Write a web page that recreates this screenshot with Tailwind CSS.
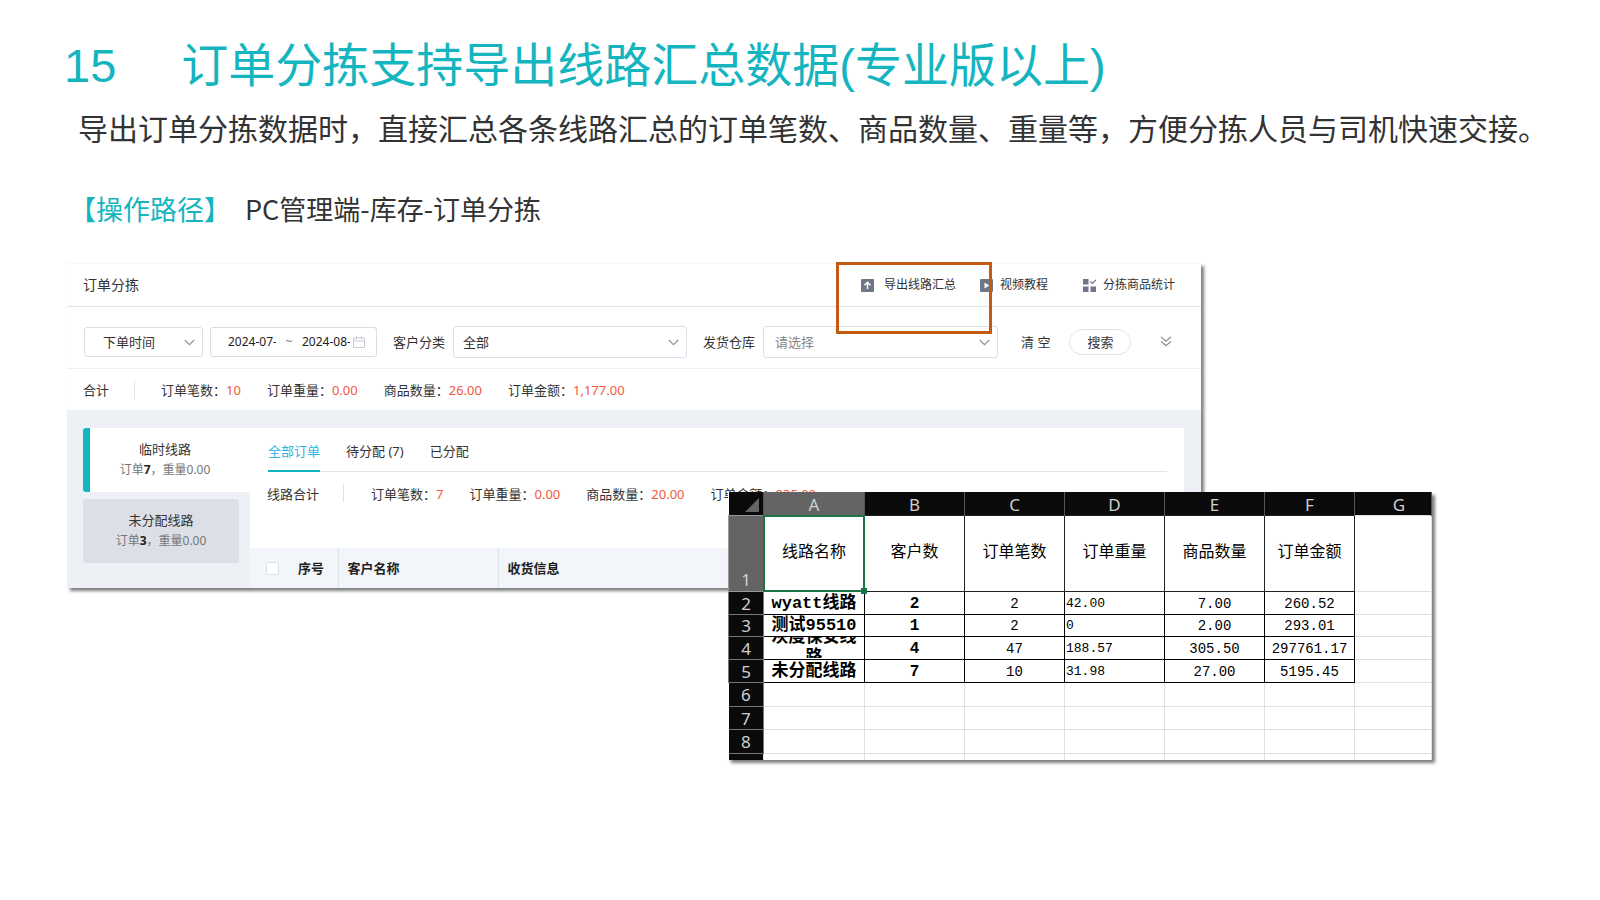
<!DOCTYPE html>
<html lang="zh-CN">
<head>
<meta charset="utf-8">
<meta name="viewport" content="width=device-width, initial-scale=1">
<title>订单分拣支持导出线路汇总数据</title>
<script src="https://cdn.jsdelivr.net/npm/@tailwindcss/browser@4"></script>
</head>
<body class="min-h-screen bg-white font-['Noto_Sans','Noto_Sans_CJK_SC',sans-serif] text-[#333]">
<main class="px-16 pt-[38px] pb-10">
  <h1 class="flex gap-[65px] text-[47px] leading-[56px] text-[#14b5bf] font-['Liberation_Sans','Noto_Sans_CJK_SC',sans-serif]">
    <span>15</span><span>订单分拣支持导出线路汇总数据(专业版以上)</span>
  </h1>
  <p class="-mr-12 mt-[13px] ml-[14px] text-[30px] leading-10 font-['Noto_Sans_CJK_SC',sans-serif]">导出订单分拣数据时，直接汇总各条线路汇总的订单笔数、商品数量、重量等，方便分拣人员与司机快速交接。</p>
  <p class="mt-[44px] ml-[5px] flex gap-[14px] text-[27px] leading-9 font-['Noto_Sans_CJK_SC',sans-serif]"><span class="text-[#14b5bf]">【操作路径】</span><span>PC管理端-库存-订单分拣</span></p>

  <div class="relative mt-9 ml-[3px]">
    <!-- Order sorting screen -->
    <section class="w-full max-w-[1134px] bg-white text-[13px] leading-5 shadow-[3px_3px_3px_rgba(0,0,0,0.5)]">
      <header class="flex h-11 items-center border-t border-b border-t-[#f7f7f7] border-b-[#e2e4e6] pr-[26px] pl-4">
        <h2 class="text-[14px]">订单分拣</h2>
        <div class="ml-auto flex items-center text-[12px]">
          <button type="button" class="relative flex items-center gap-[10px]">
            <svg class="size-[13px]" viewBox="0 0 13 13"><rect width="13" height="13" rx="1" fill="#6f7688"/><path d="M6.500 10V3.500M3.500 6.300l3-3 3 3" fill="none" stroke="#fff" stroke-width="1.500"/></svg>
            <span>导出线路汇总</span>
            <span class="absolute -top-[13px] -right-9 z-10 h-[72px] w-[156px] border-3 border-[#c55a11]"></span>
          </button>
          <button type="button" class="ml-6 flex items-center gap-[7px]">
            <svg class="size-[13px]" viewBox="0 0 13 13"><rect width="13" height="13" rx="1" fill="#6f7688"/><path d="M4.500 3.500v6L9.300 6.500z" fill="#fff"/></svg>
            <span>视频教程</span>
          </button>
          <button type="button" class="ml-[35px] flex items-center gap-[7px]">
            <svg class="size-[13px]" viewBox="0 0 13 13"><path d="M0 0h5.500v5.500H0zM0 7.500h5.500V13H0zM7.500 7.500H13V13H7.500z" fill="#6f7688"/><path d="M7.300 2.500l2 2L13 .8" fill="none" stroke="#6f7688" stroke-width="1.200"/></svg>
            <span>分拣商品统计</span>
          </button>
        </div>
      </header>

      <form class="flex h-[62px] items-center border-b border-[#eceff5] pt-2 pl-[17px]">
        <div class="relative w-[119px]">
          <select aria-label="时间类型" class="block h-[30px] w-full appearance-none rounded-[3px] border border-[#d9e0ea] bg-white pl-[18px]"><option>下单时间</option></select>
          <svg class="pointer-events-none absolute top-3 right-2 h-[7px] w-[11px]" viewBox="0 0 11 7" fill="none" stroke="#909399" stroke-width="1.200"><path d="M.8 1l4.700 4.700L10.200 1"/></svg>
        </div>
        <div class="ml-[7px] flex h-[30px] w-[167px] items-center rounded-[3px] border border-[#d9dce3] pl-[17px] text-[12px] text-[#222]">
          <input aria-label="开始日期" value="2024-07-01" class="w-12">
          <span class="w-[26px] text-center text-[#777]">~</span>
          <input aria-label="结束日期" value="2024-08-01" class="w-12">
          <svg class="ml-[3px] size-3" viewBox="0 0 12 12" fill="none" stroke="#c8cbd1"><path d="M.5 2h11v9.500H.5zM.5 5h11M3.500 0v3M8.500 0v3"/></svg>
        </div>
        <label for="cat" class="ml-4">客户分类</label>
        <div class="relative ml-2 w-[234px]">
          <select id="cat" class="block h-8 w-full appearance-none rounded-[3px] border border-[#d9e0ea] bg-white pl-[9px]"><option>全部</option></select>
          <svg class="pointer-events-none absolute top-[13px] right-2 h-[7px] w-[11px]" viewBox="0 0 11 7" fill="none" stroke="#909399" stroke-width="1.200"><path d="M.8 1l4.700 4.700L10.200 1"/></svg>
        </div>
        <label for="wh" class="ml-4">发货仓库</label>
        <div class="relative ml-2 w-[235px]">
          <select id="wh" class="block h-8 w-full appearance-none rounded-[3px] border border-[#d9e0ea] bg-white pl-[11px] text-[#888]"><option>请选择</option></select>
          <svg class="pointer-events-none absolute top-[13px] right-2 h-[7px] w-[11px]" viewBox="0 0 11 7" fill="none" stroke="#909399" stroke-width="1.200"><path d="M.8 1l4.700 4.700L10.200 1"/></svg>
        </div>
        <button type="reset" class="ml-[23px]">清 空</button>
        <button type="button" class="ml-[19px] h-[26px] w-[62px] rounded-full border border-[#dfe4ee]">搜索</button>
        <button type="button" aria-label="展开" class="ml-[29px]"><svg class="h-[11px] w-3" viewBox="0 0 12 11" fill="none" stroke="#80848c" stroke-width="1.100"><path d="M1 .8l5 4.400L11 .8M1 5.300l5 4.400 5-4.400"/></svg></button>
      </form>

      <div class="flex h-[41px] items-center pl-4">
        <span>合计</span>
        <span class="mr-[26px] ml-[25px] h-[18px] w-px bg-[#dfe2e8]"></span>
        <div class="flex gap-[26px]">
          <span>订单笔数：<b class="font-normal text-[#f0593c]">10</b></span>
          <span>订单重量：<b class="font-normal text-[#f0593c]">0.00</b></span>
          <span>商品数量：<b class="font-normal text-[#f0593c]">26.00</b></span>
          <span>订单金额：<b class="font-normal text-[#f0593c]">1,177.00</b></span>
        </div>
      </div>

      <div class="flex bg-[#edf0f5] pt-[18px] pr-[17px] pl-4">
        <nav class="w-[167px] shrink-0">
          <a href="#" class="block h-16 rounded-l-[3px] border-l-7 border-[#14b5bf] bg-white pt-[11px] pr-[10px] text-center">临时线路<br><span class="text-[12px] text-[#777]">订单<b class="text-[#222]">7</b>，重量0.00</span></a>
          <a href="#" class="mt-[7px] mr-[11px] block h-16 rounded-[3px] bg-[#dcdfe6] pt-[11px] text-center">未分配线路<br><span class="text-[12px] text-[#777]">订单<b class="text-[#222]">3</b>，重量0.00</span></a>
        </nav>
        <div class="min-w-0 grow bg-white">
          <div class="mr-[17px] ml-[18px] flex h-11 items-end gap-[26px] border-b border-[#dfe4ec]">
            <button type="button" class="-mb-px h-8 border-b-2 border-[#14b5bf] pb-[9px] text-[#2fb4e0]">全部订单</button>
            <button type="button" class="h-8 pb-[9px]">待分配 (7)</button>
            <button type="button" class="h-8 pb-[9px]">已分配</button>
          </div>
          <div class="flex h-[76px] items-start pt-3 pl-[17px] whitespace-nowrap">
            <span>线路合计</span>
            <span class="mr-[27px] ml-6 h-[18px] w-px shrink-0 bg-[#dfe2e8]"></span>
            <div class="flex gap-[26px]">
              <span>订单笔数：<b class="font-normal text-[#f0593c]">7</b></span>
              <span>订单重量：<b class="font-normal text-[#f0593c]">0.00</b></span>
              <span>商品数量：<b class="font-normal text-[#f0593c]">20.00</b></span>
              <span>订单金额：<b class="font-normal text-[#f0593c]">835.00</b></span>
            </div>
          </div>
          <table class="w-full table-fixed bg-[#f2f5fa] text-left text-[#222]">
            <colgroup><col class="w-12"><col class="w-10"><col class="w-40"><col></colgroup>
            <thead><tr class="h-10">
              <th class="pl-4"><input type="checkbox" aria-label="全选" class="block size-[13px] appearance-none rounded-[2px] border border-[#d9e0ea] bg-white"></th>
              <th class="border-r border-[#dfe3ea]">序号</th>
              <th class="border-r border-[#dfe3ea] pl-[9px]">客户名称</th>
              <th class="pl-[9px]">收货信息</th>
            </tr></thead>
          </table>
        </div>
      </div>
    </section>

    <!-- Exported workbook, lying over the screen -->
    <section class="absolute top-[229px] left-[661px] z-20 w-[704px] bg-white text-black shadow-[3px_3px_3px_rgba(0,0,0,0.5)]">
      <table class="w-full table-fixed border-collapse text-center font-['Liberation_Mono','Noto_Sans_CJK_SC',monospace] text-[14px] leading-[18px]">
        <colgroup><col class="w-[35px]"><col class="w-[101px]"><col class="w-[100px]"><col class="w-[100px]"><col class="w-[100px]"><col class="w-[100px]"><col class="w-[90px]"><col></colgroup>
        <thead class="bg-[#0a0a0a] font-['Noto_Sans',sans-serif] text-[17px] text-[#d0d0d0]">
          <tr class="h-[23px] *:border-r *:border-[#555] *:p-0 *:pt-[3px] *:font-normal">
            <th><svg class="mr-1 ml-auto size-[14px]" viewBox="0 0 14 14"><path d="M14 0v14H0z" fill="#646464"/></svg></th>
            <th class="bg-[#646464]">A</th><th>B</th><th>C</th><th>D</th><th>E</th><th>F</th><th class="pl-3!">G</th>
          </tr>
        </thead>
        <tbody>
          <tr class="h-[76px] text-[16px] *:border *:border-[#222] *:p-0 *:font-normal">
            <th class="border-[#999]! bg-[#646464] pb-0.5! align-bottom font-['Noto_Sans',sans-serif] text-[17px] text-[#d0d0d0]">1</th>
            <td class="relative">线路名称<span class="absolute -inset-px border-2 border-[#1b7443]"></span><span class="absolute -right-[3px] -bottom-[3px] z-10 size-[6px] bg-[#1b7443]"></span></td>
            <td>客户数</td><td>订单笔数</td><td>订单重量</td><td>商品数量</td><td>订单金额</td><td class="border-[#e0e0e0]! border-l-[#222]!"></td>
          </tr>
          <tr class="h-[23px] *:border *:border-black *:p-0 *:pt-0.5">
            <th class="border-[#777]! bg-[#0a0a0a] font-['Noto_Sans',sans-serif] text-[17px] font-normal text-[#d0d0d0]">2</th>
            <td class="text-[17px] font-bold">wyatt线路</td><td class="text-[16px] font-bold">2</td><td>2</td><td class="pl-px! text-left text-[13px]">42.00</td><td>7.00</td><td>260.52</td><td class="border-[#e0e0e0]! border-l-black!"></td>
          </tr>
          <tr class="h-[22px] *:border *:border-black *:p-0 *:pt-0.5">
            <th class="border-[#777]! bg-[#0a0a0a] font-['Noto_Sans',sans-serif] text-[17px] font-normal text-[#d0d0d0]">3</th>
            <td class="text-[17px] font-bold">测试95510</td><td class="text-[16px] font-bold">1</td><td>2</td><td class="pl-px! text-left text-[13px]">0</td><td>2.00</td><td>293.01</td><td class="border-[#e0e0e0]! border-l-black!"></td>
          </tr>
          <tr class="h-[23px] *:border *:border-black *:p-0 *:pt-0.5">
            <th class="border-[#777]! bg-[#0a0a0a] font-['Noto_Sans',sans-serif] text-[17px] font-normal text-[#d0d0d0]">4</th>
            <td class="pt-0! text-[17px] leading-5 font-bold"><div class="flex h-[21px] items-center justify-center overflow-hidden"><span class="w-[86px]">灰度保安线路</span></div></td><td class="text-[16px] font-bold">4</td><td>47</td><td class="pl-px! text-left text-[13px]">188.57</td><td>305.50</td><td>297761.17</td><td class="border-[#e0e0e0]! border-l-black!"></td>
          </tr>
          <tr class="h-[23px] *:border *:border-black *:p-0 *:pt-0.5">
            <th class="border-[#777]! bg-[#0a0a0a] font-['Noto_Sans',sans-serif] text-[17px] font-normal text-[#d0d0d0]">5</th>
            <td class="text-[17px] font-bold">未分配线路</td><td class="text-[16px] font-bold">7</td><td>10</td><td class="pl-px! text-left text-[13px]">31.98</td><td>27.00</td><td>5195.45</td><td class="border-[#e0e0e0]! border-l-black!"></td>
          </tr>
          <tr class="h-6 *:border-r *:border-b *:border-[#e0e0e0] *:p-0 *:pt-0.5">
            <th class="border-[#777]! bg-[#0a0a0a] font-['Noto_Sans',sans-serif] text-[17px] font-normal text-[#d0d0d0]">6</th>
            <td></td><td></td><td></td><td></td><td></td><td></td><td></td>
          </tr>
          <tr class="h-[23px] *:border-r *:border-b *:border-[#e0e0e0] *:p-0 *:pt-0.5">
            <th class="border-[#777]! bg-[#0a0a0a] font-['Noto_Sans',sans-serif] text-[17px] font-normal text-[#d0d0d0]">7</th>
            <td></td><td></td><td></td><td></td><td></td><td></td><td></td>
          </tr>
          <tr class="h-6 *:border-r *:border-b *:border-[#e0e0e0] *:p-0 *:pt-0.5">
            <th class="border-[#777]! bg-[#0a0a0a] font-['Noto_Sans',sans-serif] text-[17px] font-normal text-[#d0d0d0]">8</th>
            <td></td><td></td><td></td><td></td><td></td><td></td><td></td>
          </tr>
          <tr class="h-[7px] *:border-r *:border-[#e0e0e0] *:p-0">
            <th class="bg-[#0a0a0a]"></th><td></td><td></td><td></td><td></td><td></td><td></td><td></td>
          </tr>
        </tbody>
      </table>
    </section>
  </div>
</main>
</body>
</html>
